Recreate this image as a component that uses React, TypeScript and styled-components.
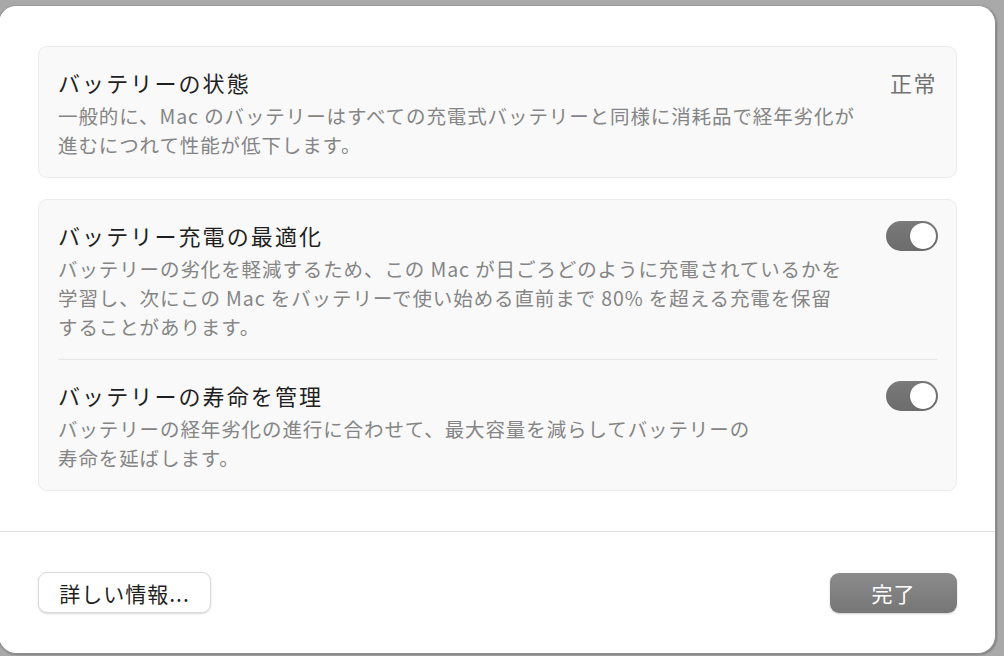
import React from "react";
import styled, { createGlobalStyle } from "styled-components";

const Global = createGlobalStyle`
  html, body {
    margin: 0;
    padding: 0;
    background: #a9a9a9;
    width: 1004px;
    height: 656px;
    overflow: hidden;
  }
  body {
    font-family: "Noto Sans CJK JP", "Noto Sans", sans-serif;
  }
`;

const Stage = styled.div`
  padding-top: 5px;
  width: 1004px;
  height: 651px;
`;

const Dialog = styled.div`
  box-sizing: border-box;
  margin-left: -2px;
  width: 998px;
  height: 649px;
  background: #ffffff;
  border: 1px solid #8f8f8f;
  border-top-color: #9a9a9a;
  border-radius: 18px;
  box-shadow: 1px 1px 2px rgba(0, 0, 0, 0.25);
  display: flex;
  flex-direction: column;
  overflow: hidden;
`;

const Content = styled.div`
  padding: 40px 38px 40px 39px;
  display: flex;
  flex-direction: column;
  gap: 21px;
`;

const Card = styled.div`
  background: #f9f9f9;
  border: 1px solid #ebebeb;
  border-radius: 9px;
  display: flex;
  flex-direction: column;
`;

const Row = styled.div`
  display: flex;
  align-items: flex-start;
  justify-content: space-between;
  padding: 20px 18px 18px 19px;
`;

const Separator = styled.div`
  height: 1px;
  background: #e6e6e6;
  margin: 0 19px;
`;

const TextBlock = styled.div`
  display: flex;
  flex-direction: column;
  gap: 4px;
`;

const Title = styled.div`
  font-size: 22px;
  line-height: 30px;
  color: #1f1f1f;
  letter-spacing: 2.1px;
`;

const Description = styled.div`
  font-size: 19.5px;
  line-height: 29px;
  color: #858585;
  letter-spacing: 0.9px;
  white-space: nowrap;
`;

const Status = styled.div`
  font-size: 22px;
  line-height: 30px;
  color: #727272;
  letter-spacing: 1.5px;
  margin-right: 1px;
`;

const Toggle = styled.div`
  flex: none;
  width: 52px;
  height: 30px;
  border-radius: 15px;
  background: linear-gradient(180deg, #7a7a7a 0%, #6c6c6c 100%);
  position: relative;
  margin-top: 1px;
`;

const Knob = styled.div`
  position: absolute;
  top: 2px;
  right: 2px;
  width: 26px;
  height: 26px;
  border-radius: 50%;
  background: #ffffff;
  box-shadow: 0 0 1px rgba(0, 0, 0, 0.4);
`;

const Divider = styled.div`
  height: 1px;
  background: #dedede;
`;

const Footer = styled.div`
  flex: 1;
  display: flex;
  align-items: flex-start;
  justify-content: space-between;
  padding: 40px 38px 0 39px;
`;

const Button = styled.button<{ $primary?: boolean }>`
  font-family: "Noto Sans CJK JP", "Noto Sans", sans-serif;
  font-size: 21px;
  letter-spacing: 1px;
  height: 41px;
  padding: 0;
  border-radius: 9px;
  display: flex;
  align-items: center;
  justify-content: center;
  color: ${(p) => (p.$primary ? "#ffffff" : "#1f1f1f")};
  background: ${(p) =>
    p.$primary ? "linear-gradient(180deg, #8b8b8b 0%, #767676 100%)" : "#ffffff"};
  border: ${(p) => (p.$primary ? "none" : "1px solid #dadada")};
  box-shadow: ${(p) =>
    p.$primary ? "0 1px 2px rgba(0,0,0,0.2)" : "0 1px 2px rgba(0,0,0,0.15)"};
  width: ${(p) => (p.$primary ? "127px" : "173px")};
  height: ${(p) => (p.$primary ? "40px" : "41px")};
  margin-top: ${(p) => (p.$primary ? "1px" : "0")};
`;

type Item = { title: string; lines: string[] };

const items: Item[] = [
  {
    title: "バッテリー充電の最適化",
    lines: [
      "バッテリーの劣化を軽減するため、この Mac が日ごろどのように充電されているかを",
      "学習し、次にこの Mac をバッテリーで使い始める直前まで 80% を超える充電を保留",
      "することがあります。",
    ],
  },
  {
    title: "バッテリーの寿命を管理",
    lines: [
      "バッテリーの経年劣化の進行に合わせて、最大容量を減らしてバッテリーの",
      "寿命を延ばします。",
    ],
  },
];

export default function App() {
  return (
    <>
      <Global />
      <Stage>
        <Dialog>
          <Content>
            <Card>
              <Row>
                <TextBlock>
                  <Title>バッテリーの状態</Title>
                  <Description>
                    一般的に、Mac のバッテリーはすべての充電式バッテリーと同様に消耗品で経年劣化が
                    <br />
                    進むにつれて性能が低下します。
                  </Description>
                </TextBlock>
                <Status>正常</Status>
              </Row>
            </Card>
            <Card>
              {items.map((it, i) => (
                <React.Fragment key={it.title}>
                  {i > 0 && <Separator />}
                  <Row>
                    <TextBlock>
                      <Title>{it.title}</Title>
                      <Description>
                        {it.lines.map((l, j) => (
                          <React.Fragment key={j}>
                            {j > 0 && <br />}
                            {l}
                          </React.Fragment>
                        ))}
                      </Description>
                    </TextBlock>
                    <Toggle>
                      <Knob />
                    </Toggle>
                  </Row>
                </React.Fragment>
              ))}
            </Card>
          </Content>
          <Divider />
          <Footer>
            <Button>詳しい情報...</Button>
            <Button $primary>完了</Button>
          </Footer>
        </Dialog>
      </Stage>
    </>
  );
}
